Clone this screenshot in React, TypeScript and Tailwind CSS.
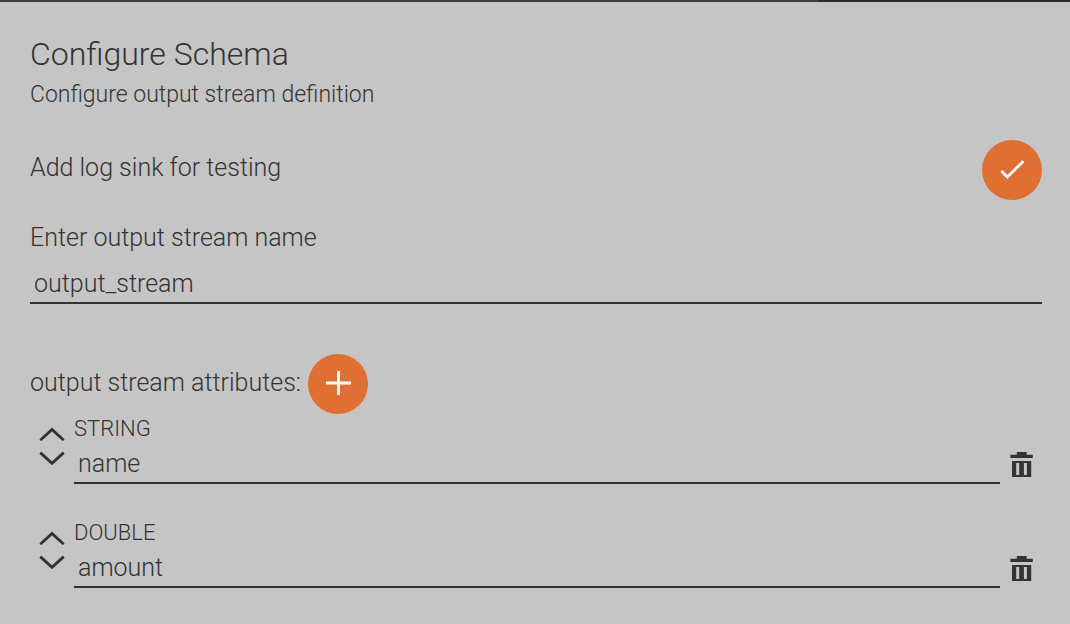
import { useState } from "react";

const initialAttributes = [
  { id: 1, type: "STRING", name: "name" },
  { id: 2, type: "DOUBLE", name: "amount" },
];

function Chevron({ up }: { up?: boolean }) {
  return (
    <svg width="26" height="14" viewBox="0 0 26 14" fill="none" stroke="#333" strokeWidth="2.8" aria-hidden="true">
      <path d={up ? "M1.3 13.2 13 2.4l11.7 10.8" : "M1.3 1.6 13 12.4 24.7 1.6"} />
    </svg>
  );
}

function TrashIcon() {
  return (
    <svg width="24" height="28" viewBox="0 0 24 28" aria-hidden="true">
      <path
        fill="#333"
        fillRule="evenodd"
        d="M6.8 2h9.8v2.8h6.2V8H.4V4.8h6.4zM2 11h19.2v16H2zM6.2 13v12h3V13zM13.9 13v12h3V13z"
      />
    </svg>
  );
}

export default function App() {
  const [attributes, setAttributes] = useState(initialAttributes);
  const [logSink, setLogSink] = useState(true);

  const move = (index: number, by: number) => {
    const next = [...attributes];
    const target = index + by;
    if (target < 0 || target >= next.length) return;
    [next[index], next[target]] = [next[target], next[index]];
    setAttributes(next);
  };

  return (
    <div className="min-h-screen bg-[#c5c5c5] font-['Roboto',sans-serif] font-light text-[#333]">
      <div className="flex h-0.5 bg-[#3d3c3c]">
        <div className="ml-auto w-63 bg-[#2a2a2a]" />
      </div>
      <main className="pt-8 pr-7 pb-9 pl-[30px]">
        <h1 className="text-[32px] leading-10">Configure Schema</h1>
        <p className="text-[23px] leading-[42px]">Configure output stream definition</p>

        <div className="mt-6 flex items-center justify-between">
          <span className="pb-1 text-[25px]">Add log sink for testing</span>
          <button
            type="button"
            aria-label="Add log sink for testing"
            aria-pressed={logSink}
            onClick={() => setLogSink(!logSink)}
            className="flex size-15 items-center justify-center rounded-full bg-[#df6f32]"
          >
            <svg width="26" height="20" viewBox="0 0 26 20" fill="none" stroke="#fff" strokeWidth="2.8" aria-hidden="true">
              {logSink && <path d="M2.4 11l6 6L24.4 1.2" />}
            </svg>
          </button>
        </div>

        <label htmlFor="stream-name" className="mt-4 block text-[25px] leading-11">Enter output stream name</label>
        <input
          id="stream-name"
          defaultValue="output_stream"
          className="mt-1 block h-10 w-full border-b-2 border-[#333] px-1 text-[25px] outline-none"
        />

        <div className="mt-[50px] flex items-center gap-[7px]">
          <h2 className="pb-0.5 text-[25px]">output stream attributes:</h2>
          <button
            type="button"
            aria-label="Add attribute"
            onClick={() => setAttributes([...attributes, { id: Date.now(), type: "STRING", name: "" }])}
            className="flex size-15 items-center justify-center rounded-full bg-[#df6f32]"
          >
            <svg width="26" height="26" viewBox="0 0 26 26" stroke="#fff" strokeWidth="2.8" aria-hidden="true">
              <path d="M13.5 0v24M1 12h25" />
            </svg>
          </button>
        </div>

        <ul className="flex flex-col gap-[34px]">
          {attributes.map((attribute, index) => (
            <li key={attribute.id} className="flex">
              <div className="mt-[13px] flex w-11 flex-col items-center gap-2.5">
                <button type="button" aria-label="Move up" onClick={() => move(index, -1)}>
                  <Chevron up />
                </button>
                <button type="button" aria-label="Move down" onClick={() => move(index, 1)}>
                  <Chevron />
                </button>
              </div>
              <div className="flex-1">
                <label htmlFor={`attribute-${attribute.id}`} className="block text-[22px] leading-[30px]">{attribute.type}</label>
                <input
                  id={`attribute-${attribute.id}`}
                  defaultValue={attribute.name}
                  className="block h-10 w-full border-b-2 border-[#333] px-1 text-[25px] outline-none"
                />
              </div>
              <button
                type="button"
                aria-label="Delete attribute"
                onClick={() => setAttributes(attributes.filter((a) => a.id !== attribute.id))}
                className="mt-9 mr-2 ml-2.5 self-start"
              >
                <TrashIcon />
              </button>
            </li>
          ))}
        </ul>
      </main>
    </div>
  );
}
